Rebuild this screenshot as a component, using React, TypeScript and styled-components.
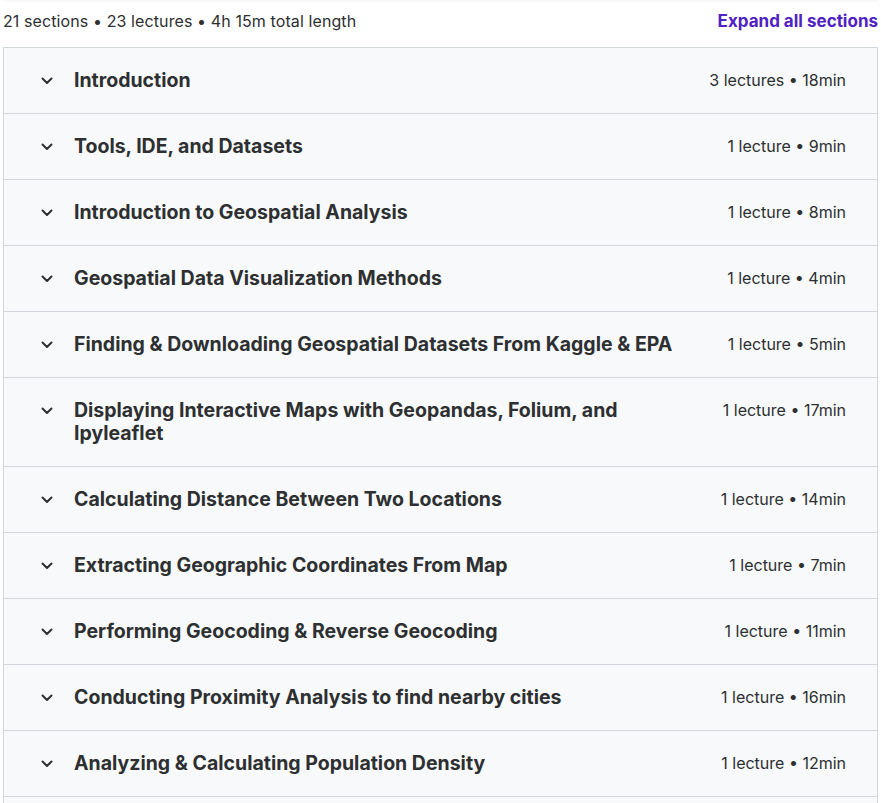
import React from "react";
import styled, { createGlobalStyle } from "styled-components";

const GlobalStyle = createGlobalStyle`
  body {
    margin: 0;
    background: #fff;
    font-family: Inter, "Noto Sans", sans-serif;
    color: #2d2f31;
  }
`;

const Page = styled.div`
  width: 875px;
  margin-left: 3px;
  border-top: 2px solid #f7f9fa;
`;

const Header = styled.div`
  display: flex;
  justify-content: space-between;
  align-items: flex-start;
  height: 45px;
  padding-top: 7px;
  box-sizing: border-box;
  line-height: 24px;
`;

const Summary = styled.span`
  font-size: 16px;
  letter-spacing: 0.1px;
`;

const ExpandButton = styled.button`
  border: 0;
  background: none;
  padding: 0;
  font: inherit;
  font-size: 17px;
  line-height: 24px;
  font-weight: 700;
  color: #5022c3;
  cursor: pointer;
`;

const SectionList = styled.div`
  border: 1px solid #d1d7dc;
  border-bottom: 0;
`;

const SectionRow = styled.div`
  display: flex;
  align-items: flex-start;
  gap: 24px;
  padding: 21px 31px 21px 36px;
  background: #f7f9fa;
  border-bottom: 1px solid #d1d7dc;
  line-height: 23px;
`;

const Chevron = styled.svg`
  flex: none;
  width: 14px;
  height: 23px;
  margin-right: -4px;
`;

const Title = styled.h3`
  flex: 1;
  margin: 0;
  max-width: 610px;
  font-size: 19.5px;
  font-weight: 700;
`;

const Meta = styled.span`
  margin-left: auto;
  font-size: 16px;
  white-space: nowrap;
`;

interface Section {
  title: string;
  meta: string;
}

const sections: Section[] = [
  { title: "Introduction", meta: "3 lectures • 18min" },
  { title: "Tools, IDE, and Datasets", meta: "1 lecture • 9min" },
  { title: "Introduction to Geospatial Analysis", meta: "1 lecture • 8min" },
  { title: "Geospatial Data Visualization Methods", meta: "1 lecture • 4min" },
  { title: "Finding & Downloading Geospatial Datasets From Kaggle & EPA", meta: "1 lecture • 5min" },
  { title: "Displaying Interactive Maps with Geopandas, Folium, and Ipyleaflet", meta: "1 lecture • 17min" },
  { title: "Calculating Distance Between Two Locations", meta: "1 lecture • 14min" },
  { title: "Extracting Geographic Coordinates From Map", meta: "1 lecture • 7min" },
  { title: "Performing Geocoding & Reverse Geocoding", meta: "1 lecture • 11min" },
  { title: "Conducting Proximity Analysis to find nearby cities", meta: "1 lecture • 16min" },
  { title: "Analyzing & Calculating Population Density", meta: "1 lecture • 12min" },
  { title: "Creating Heatmaps with Folium", meta: "1 lecture • 9min" },
];

const ChevronIcon = () => (
  <Chevron viewBox="0 0 14 23" fill="none">
    <path d="M2.5 9.5l4.5 4.5 4.5-4.5" stroke="#2d2f31" strokeWidth="2" strokeLinecap="round" strokeLinejoin="round" />
  </Chevron>
);

export default function App() {
  return (
    <Page>
      <GlobalStyle />
      <Header>
        <Summary>21 sections • 23 lectures • 4h 15m total length</Summary>
        <ExpandButton>Expand all sections</ExpandButton>
      </Header>
      <SectionList>
        {sections.map((s) => (
          <SectionRow key={s.title}>
            <ChevronIcon />
            <Title>{s.title}</Title>
            <Meta>{s.meta}</Meta>
          </SectionRow>
        ))}
      </SectionList>
    </Page>
  );
}
